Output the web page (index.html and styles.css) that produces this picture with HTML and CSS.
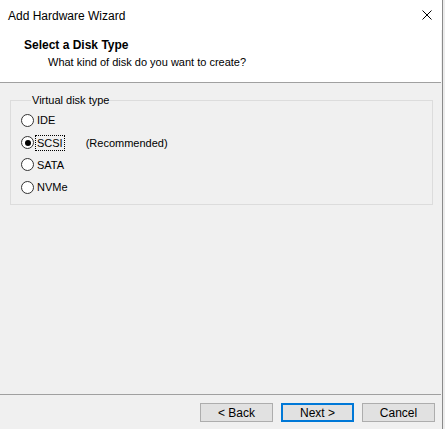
FILE: index.html
```html
<!DOCTYPE html>
<html>
<head>
<meta charset="utf-8">
<link rel="stylesheet" href="styles.css">
</head>
<body>
<div class="window">
  <div class="titlebar">
    <span class="title">Add Hardware Wizard</span>
    <svg class="close" width="10" height="10" viewBox="0 0 10 10"><path d="M0.5 0.5L9.5 9.5M9.5 0.5L0.5 9.5" stroke="#000" stroke-width="1" fill="none"/></svg>
  </div>
  <div class="header">
    <div class="h-title">Select a Disk Type</div>
    <div class="h-sub">What kind of disk do you want to create?</div>
  </div>
  <div class="content">
    <fieldset class="group">
      <legend>Virtual disk type</legend>
      <div class="row"><span class="radio"></span><span class="label">IDE</span></div>
      <div class="row"><span class="radio checked"></span><span class="label focus">SCSI</span><span class="note">(Recommended)</span></div>
      <div class="row"><span class="radio"></span><span class="label">SATA</span></div>
      <div class="row"><span class="radio"></span><span class="label">NVMe</span></div>
    </fieldset>
  </div>
  <div class="footer">
    <button class="btn">&lt; Back</button>
    <button class="btn default">Next &gt;</button>
    <button class="btn">Cancel</button>
  </div>
</div>
</body>
</html>
```
FILE: styles.css
```css
html, body {
  margin: 0;
  padding: 0;
  width: 445px;
  height: 429px;
  overflow: hidden;
  background: #ececec;
  font-family: "Liberation Sans", Arial, sans-serif;
  font-size: 12px;
  color: #000;
}
.window {
  width: 442px;
  height: 429px;
  border-right: 1px solid #8a8a8a;
  background: #f0f0f0;
  display: flex;
  flex-direction: column;
  box-sizing: content-box;
}
.titlebar {
  height: 30px;
  background: #fff;
  display: flex;
  align-items: center;
  padding-left: 8px;
  padding-right: 10px;
}
.title {
  flex: 1;
  font-size: 12px;
  padding-top: 1px;
}
.close {
  display: block;
}
.header {
  background: #fff;
  height: 53px;
  box-sizing: border-box;
  padding: 7px 0 0 24px;
  border-bottom: 1px solid #a0a0a0;
  margin-right: 1px;
}
.h-title {
  font-weight: bold;
  line-height: 16px;
  height: 16px;
}
.h-sub {
  font-size: 11px;
  line-height: 16px;
  margin-top: 1px;
  padding-left: 24px;
}
.content {
  flex: 1;
  padding: 10px 10px 0 10px;
  font-size: 11px;
}
.group {
  margin: 0;
  border: 1px solid #dcdcdc;
  padding: 2px 0 5px 10px;
  width: 423px;
  box-sizing: border-box;
}
.group legend {
  padding: 0 1px;
  margin-left: 10px;
  line-height: 14px;
}
.row {
  display: flex;
  align-items: center;
  height: 22.4px;
}
.radio {
  width: 11px;
  height: 11px;
  border: 1px solid #333;
  border-radius: 50%;
  background: #fff;
  margin-right: 1px;
  position: relative;
  flex: none;
}
.radio.checked::after {
  content: "";
  position: absolute;
  left: 2.5px;
  top: 2.5px;
  width: 6px;
  height: 6px;
  border-radius: 50%;
  background: #000;
}
.label {
  padding: 0 1px;
  line-height: 14px;
  border: 1px dotted transparent;
}
.label.focus {
  border-color: #000;
}
.note {
  margin-left: 21px;
}
.footer {
  height: 35px;
  border-top: 1px solid #a0a0a0;
  margin-right: 1px;
  display: flex;
  justify-content: flex-end;
  align-items: flex-start;
  padding: 8px 6px 0 0;
  gap: 8px;
  box-sizing: border-box;
}
.btn {
  width: 73px;
  height: 19px;
  margin: 0;
  padding: 0;
  background: #e1e1e1;
  border: 1px solid #adadad;
  font-family: "Liberation Sans", Arial, sans-serif;
  font-size: 12px;
  color: #000;
}
.btn.default {
  border: 2px solid #0078d7;
}
```
